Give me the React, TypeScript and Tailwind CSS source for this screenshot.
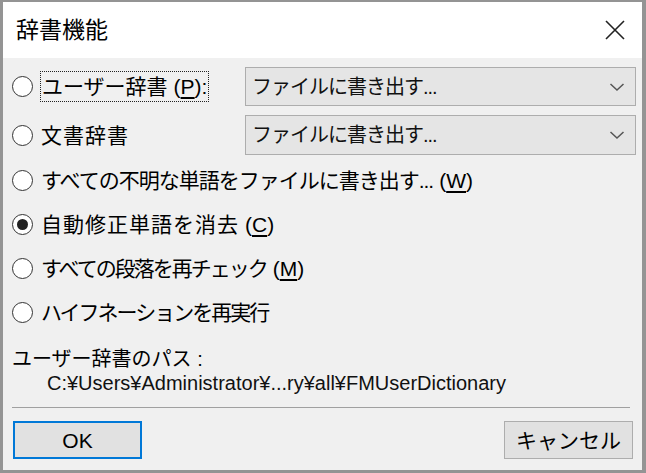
import React from 'react';

const font = "font-['Liberation_Sans','Noto_Sans_CJK_JP',sans-serif]";

function Radio({ checked = false }: { checked?: boolean }) {
  return (
    <span className="w-[21px] h-[21px] shrink-0 rounded-full border-[1.5px] border-[#333333] bg-white flex items-center justify-center">
      {checked && <span className="w-[11px] h-[11px] rounded-full bg-[#222222]" />}
    </span>
  );
}

function Key({ k }: { k: string }) {
  return (
    <span className="ml-[6px] tracking-normal">
      (<span className="underline underline-offset-[3px]">{k}</span>)
    </span>
  );
}

function Dropdown() {
  return (
    <div className="ml-auto w-[391px] h-full flex items-center bg-[#e5e5e5] border border-[#adadad] pl-[6px] pr-[10px]">
      <span className="text-[20px] tracking-[-1px] text-[#111]">ファイルに書き出す...</span>
      <svg className="ml-auto" width="16" height="10" viewBox="0 0 16 10" fill="none">
        <path d="M1.5 2 L8 8 L14.5 2" stroke="#555" strokeWidth="1.5" />
      </svg>
    </div>
  );
}

export default function App() {
  return (
    <div className={`w-[646px] h-[473px] flex flex-col border-[#949494] border-l-[3px] border-t-2 border-r-[4px] border-b-[3px] text-black ${font}`}>
      <div className="h-[56px] bg-white flex items-center pl-[13px] pr-[17px]">
        <span className="text-[23px] leading-none">辞書機能</span>
        <svg className="ml-auto" width="20" height="20" viewBox="0 0 20 20" fill="none">
          <path d="M1 1 L19 19 M19 1 L1 19" stroke="#222" strokeWidth="1.6" />
        </svg>
      </div>

      <div className="flex-1 bg-[#f0f0f0] flex flex-col pl-[9px] pr-[6px] pt-[9px]">
        <div className="flex items-center h-[39px]">
          <Radio />
          <span className="ml-[7px] text-[21px] leading-none border border-dotted border-[#222] px-px py-[4px]">
            ユーザー辞書<Key k="P" />:
          </span>
          <Dropdown />
        </div>
        <div className="flex items-center h-[40px] mt-[9px]">
          <Radio />
          <span className="ml-[8px] text-[21px] leading-none tracking-[1px]">文書辞書</span>
          <Dropdown />
        </div>

        <div className="flex items-center h-[44px] mt-[3px]">
          <Radio />
          <span className="ml-[8px] text-[21px] leading-none tracking-[-1px]">
            すべての不明な単語をファイルに書き出す...<Key k="W" />
          </span>
        </div>
        <div className="flex items-center h-[44px]">
          <Radio checked />
          <span className="ml-[8px] text-[21px] leading-none tracking-[1px]">
            自動修正単語を消去<Key k="C" />
          </span>
        </div>
        <div className="flex items-center h-[44px]">
          <Radio />
          <span className="ml-[8px] text-[21px] leading-none tracking-[-2px]">
            すべての段落を再チェック<Key k="M" />
          </span>
        </div>
        <div className="flex items-center h-[44px]">
          <Radio />
          <span className="ml-[8px] text-[21px] leading-none tracking-[-2px]">ハイフネーションを再実行</span>
        </div>

        <div className="h-[26px] mt-[12px] flex items-center text-[20px] leading-none">ユーザー辞書のパス :</div>
        <div className="h-[22px] flex items-center ml-[35px] text-[20px] leading-none text-[#111]">
          C:¥Users¥Administrator¥...ry¥all¥FMUserDictionary
        </div>

        <div className="mt-[13px] mr-[6px] border-t border-[#a0a0a0]" />

        <div className="flex mt-[13px] mr-[3px]">
          <button className="ml-px w-[129px] h-[38px] bg-[#e1e1e1] border-2 border-[#0078d7] text-[21px] leading-none">
            OK
          </button>
          <button className="ml-auto w-[129px] h-[38px] bg-[#e1e1e1] border border-[#adadad] text-[21px] leading-none">
            キャンセル
          </button>
        </div>
      </div>
    </div>
  );
}
